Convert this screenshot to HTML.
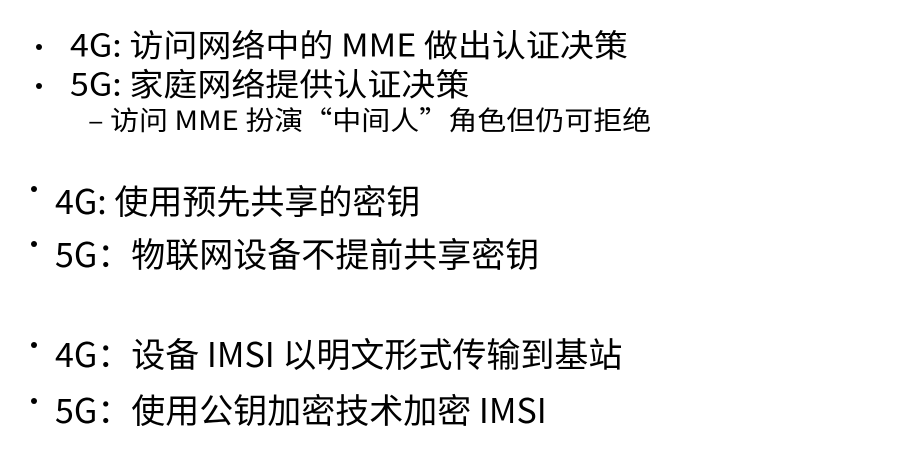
<!DOCTYPE html>
<html><head><meta charset="utf-8"><style>
body{margin:0;width:906px;height:455px;background:#fff;position:relative;overflow:hidden;font-family:"Noto Sans CJK SC","Liberation Sans",sans-serif;color:#000}
.l{position:absolute;white-space:nowrap;line-height:1;transform-origin:0 0}
.b{position:absolute;width:6px;height:6px;border-radius:50%;background:#000}
</style></head><body>
<div class="b" style="left:36px;top:44px"></div>
<div class="l" style="left:70px;top:28px;font-size:34px;transform:scaleY(0.92)">4G: 访问网络中的 MME 做出认证决策</div>
<div class="b" style="left:36px;top:83px"></div>
<div class="l" style="left:70px;top:67px;font-size:34px;transform:scaleY(0.92)">5G: 家庭网络提供认证决策</div>
<div class="l" style="left:88px;top:106px;font-size:29px;transform:scaleY(0.92)">– 访问 MME 扮演“中间人”角色但仍可拒绝</div>
<div class="b" style="left:31px;top:186px"></div>
<div class="l" style="left:55px;top:183px;font-size:34px">4G: 使用预先共享的密钥</div>
<div class="b" style="left:31px;top:241px"></div>
<div class="l" style="left:55px;top:236px;font-size:34px">5G：物联网设备不提前共享密钥</div>
<div class="b" style="left:31px;top:342px"></div>
<div class="l" style="left:55px;top:336px;font-size:34px">4G：设备 IMSI 以明文形式传输到基站</div>
<div class="b" style="left:31px;top:398px"></div>
<div class="l" style="left:55px;top:392px;font-size:34px">5G：使用公钥加密技术加密 IMSI</div>
</body></html>
